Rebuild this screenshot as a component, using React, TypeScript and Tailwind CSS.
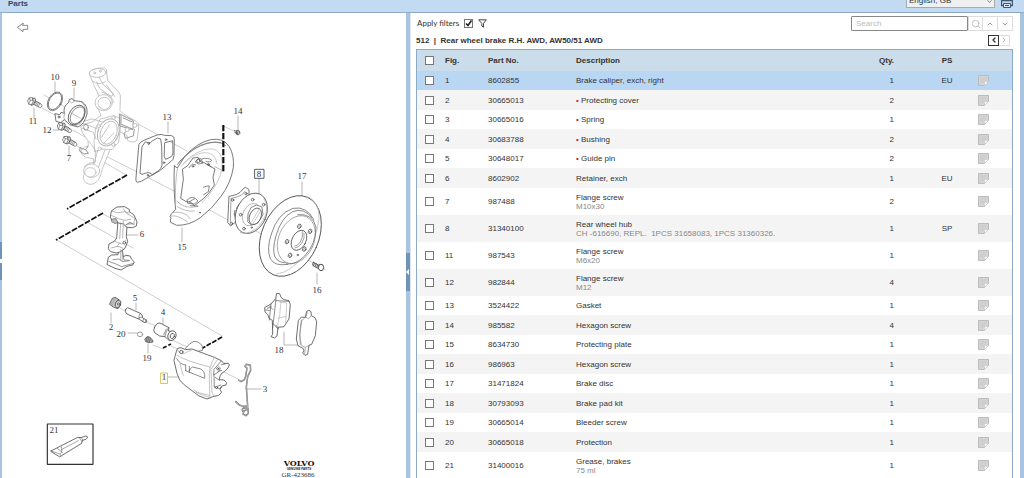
import React from "react";
import { ChevronDown, ChevronLeft, ChevronRight, ChevronUp, Search } from "lucide-react";

type Part = { fig: string; no: string; name: string; note?: string; sub?: boolean; qty: number; ps?: string };

const parts: Part[] = [
  { fig: "1", no: "8602855", name: "Brake caliper, exch, right", qty: 1, ps: "EU" },
  { fig: "2", no: "30665013", name: "Protecting cover", sub: true, qty: 2 },
  { fig: "3", no: "30665016", name: "Spring", sub: true, qty: 1 },
  { fig: "4", no: "30683788", name: "Bushing", sub: true, qty: 2 },
  { fig: "5", no: "30648017", name: "Guide pin", sub: true, qty: 2 },
  { fig: "6", no: "8602902", name: "Retainer, exch", qty: 1, ps: "EU" },
  { fig: "7", no: "987488", name: "Flange screw", note: "M10x30", qty: 2 },
  { fig: "8", no: "31340100", name: "Rear wheel hub", note: "CH -616690, REPL.  1PCS 31658083, 1PCS 31360326.", qty: 1, ps: "SP" },
  { fig: "11", no: "987543", name: "Flange screw", note: "M6x20", qty: 1 },
  { fig: "12", no: "982844", name: "Flange screw", note: "M12", qty: 4 },
  { fig: "13", no: "3524422", name: "Gasket", qty: 1 },
  { fig: "14", no: "985582", name: "Hexagon screw", qty: 4 },
  { fig: "15", no: "8634730", name: "Protecting plate", qty: 1 },
  { fig: "16", no: "986963", name: "Hexagon screw", qty: 1 },
  { fig: "17", no: "31471824", name: "Brake disc", qty: 1 },
  { fig: "18", no: "30793093", name: "Brake pad kit", qty: 1 },
  { fig: "19", no: "30665014", name: "Bleeder screw", qty: 1 },
  { fig: "20", no: "30665018", name: "Protection", qty: 1 },
  { fig: "21", no: "31400016", name: "Grease, brakes", note: "75 ml", qty: 1 },
];

const callouts: [string, number, number][] = [
  ["10", 55, 80], ["9", 74, 86], ["11", 33, 124], ["12", 47, 133], ["7", 69, 161], ["13", 167, 120],
  ["14", 238, 114], ["8", 259, 177], ["17", 302, 179], ["15", 182, 250], ["6", 142, 237], ["16", 317, 293],
  ["5", 135, 301], ["4", 163, 315], ["2", 111, 330], ["20", 121, 337], ["19", 147, 361], ["1", 164, 380],
  ["3", 265, 392], ["18", 279, 353], ["21", 54, 433],
];

const box = "m-0 block size-[9px] appearance-none border border-[#777] bg-white";

function Note() {
  return (
    <svg viewBox="0 0 11 11" className="mx-auto block size-[11px]" aria-hidden="true">
      <path d="M.5.5h10v6l-4 4h-6z" fill="#d4d4d4" stroke="#bcbcbc" />
      <path d="M2 3h7M2 5h6M2 7h4" stroke="#c3c3c3" strokeWidth=".6" />
      <path d="M10.500 6.500h-4v4z" fill="#fafafa" stroke="#c4c4c4" strokeWidth=".6" />
    </svg>
  );
}

function Screw({ x, y, s = 1 }: { x: number; y: number; s?: number }) {
  return (
    <g transform={`translate(${x} ${y}) scale(${s})`} stroke="#444" strokeWidth="2" fill="#fff">
      <path d="M-4-6 19 7q5 4 2 8t-7 2L-8 5z" />
      <path d="m4-1-5 9m9-7-5 9m9-7-5 9m9-7-5 9" strokeWidth="1.600" />
      <ellipse cx="-5" cy="0" rx="6" ry="12" transform="rotate(25 -5 0)" fill="#ddd" />
      <path d="m-8-12-9 1-4 9 3 9 8 3 5-9z" />
      <path d="m-17-11 4 7-5 11m5-11 8 0" strokeWidth="1.600" />
    </g>
  );
}

function Diagram() {
  return (
    <svg viewBox="2 13 404 465" className="block w-full shrink-0" role="img" aria-label="Exploded view of rear wheel brake" strokeLinecap="round" strokeLinejoin="round">
      {/* assembly axes */}
      <g stroke="#b9b9b9" strokeWidth=".7" fill="none">
        <path d="M44 95 82 117M42 108l22 12M73 130l12 7M77 146l49 29M122 115l65 36M98 152l78 40M176 192l54 29M256 231l70 39M223 126l11 5M214 168l10 3" />
        <path d="M69 212l64 36M57 240l165 96M103 214l10 5M120 308l7 4M146 322l10 4M174 341l22 10M153 345l10 4M171 346l9 4M222 371l16 8" />
        <path d="M55 82v12M74 88v12M34 108v10M69 146v9M53 130h6M168 122v11M238 116v15M259 179v15M302 182v14M182 228v14M127 235h11M317 273v11M136 303v7M163 318v8M111 313v10M128 333h9M148 344v9M168 377h11M246 389h15M284 332v13h16" stroke="#999" />
      </g>
      <g stroke="#111" strokeWidth="1.700" fill="none" strokeLinecap="butt">
        <path d="m127 175-60 34" strokeDasharray="6 1.500" />
        <path d="m103 213-47 27" strokeDasharray="6 1.500" />
        <path d="m201 349 21-12" strokeDasharray="5 1.400" />
        <path d="m163 348 8-4" strokeDasharray="4 2" />
      </g>

      {/* knuckle, sensor ring and screws */}
      <g transform="scale(.333333)" fill="none" stroke="#4a4a4a" strokeWidth="2.300">
        <g stroke="#b4b4b4" fill="#fff">
          <path d="M269 224q-3-11 11-16t34-4q8 3 6 14l3 23 34 36q6 7 4 20l-1 35 9 9 38 22q11 7 9 21l-5 37q-12 10-28 0l-3-16-22-10-16 15-6 24-28 70-9 29q-9 18-26 20-18 0-23-18-2-18 15-22l12-3 5-16-2-18-23-4q-17-9-14-21l10-9 12-5-1-15-17-24-5-18 12-8 21-5 28-21-10-22 8-28-18-38z" />
          <ellipse cx="293" cy="219" rx="25" ry="13" transform="rotate(-5 293 219)" />
          <circle cx="284" cy="219" r="3" /><circle cx="301" cy="214" r="3" />
          <path fill="none" d="M277 243q20 15 39 2M297 232l15 24 28 25-4 8-31-13M290 246l9 19 33 25 10 17M319 254l26 36" />
          <ellipse cx="311" cy="308" rx="26" ry="24" /><ellipse cx="313" cy="310" rx="19" ry="18" />
          <path d="m288 383 13-26 40-10 19 8 1 31-5 40-20 23-31-2-21 8-2-29z" />
          <ellipse cx="325" cy="397" rx="31" ry="42" transform="rotate(22 325 397)" strokeWidth="3" />
          <ellipse cx="326" cy="398" rx="24" ry="36" transform="rotate(22 326 398)" />
          <path fill="none" d="M304 412l25-38M310 431l31-32" />
          <circle cx="296" cy="378" r="5" /><circle cx="341" cy="353" r="5" /><circle cx="299" cy="446" r="5" /><circle cx="340" cy="434" r="5" />
          <path fill="none" d="m359 342 41 20-1 27-39-11zM363 345v28l35 14M370 354l27 12M384 390l-12 10 4 15 24-7 3-19" stroke="#999" strokeWidth="3" />
          <circle cx="382" cy="389" r="6" /><circle cx="405" cy="376" r="6" />
          <path fill="none" d="m249 371 22 7 19 8M247 385l33 12 8 20M254 363l22-6 29 8M267 424l19 26v35M293 451l-10 38M315 450l-22 58" />
          <ellipse cx="275" cy="512" rx="24" ry="20" /><ellipse cx="271" cy="517" rx="17" ry="14" />
          <path fill="none" d="M253 501q10-16 32-13" />
        </g>
        <path d="m241 443 17 7 7 10-13 2-12-8zM258 448l6-9" stroke="#777" />
        <ellipse cx="258" cy="382" rx="7" ry="9" stroke="#888" />
        <g stroke="#666"><ellipse cx="165" cy="304" rx="20" ry="30" transform="rotate(30 165 304)" fill="#fff" /><ellipse cx="165" cy="304" rx="17" ry="27" transform="rotate(30 165 304)" /></g>
        <path d="m165 342 3 22 14 4 11-9 16 15 25 7q19-8 27-39 3-25-15-37l-25-3-4-6-9 2-2 9q-18 14-13 33l-10-3-3 6z" fill="#fff" />
        <path d="m209 304 6 5 7-4M195 340q-8 16 1 20M241 304q16 10 15 29t-15 37q-13 11-23 5" stroke="#888" strokeWidth="1.800" />
        <ellipse cx="230" cy="345" rx="22" ry="32" transform="rotate(33 230 345)" />
        <ellipse cx="232" cy="346" rx="18" ry="28" transform="rotate(33 232 346)" stroke="#777" />
        <circle cx="177" cy="351" r="3" />
        <path d="m214 339 27 16" stroke="#aaa" />
        <Screw x={104} y={305} /><Screw x={193} y={380} /><Screw x={209} y={421} />
        <path d="m69 70-17 12 17 13v-7h14V76H69z" stroke="#666" fill="#fff" />
      </g>

      {/* gasket, splash plate, hub and disc */}
      <g transform="translate(120 90) scale(.333333)" fill="none" stroke="#505050" strokeWidth="2.300">
        <path fillRule="evenodd" fill="#fff" d="M57 163q3-8 15-12l39-16q13-4 23 1l21 1q9 2 8 14l-1 46q-1 13-10 18l-34 28-39 22q-16 11-26 12-7 0-5-15zM66 171l-6 79 6 3 10-3q8-4 14-1l7 5 19-12q7-5 10-16l-1-57-3-22-10-3-15 9q-5 7-11 5l-9-2zM135 158l23-6 1 37q-1 10-9 13l-13 6-4-8z" />
        <circle cx="86" cy="161" r="2.500" /><circle cx="138" cy="149" r="2.500" /><circle cx="84" cy="256" r="2.500" /><circle cx="132" cy="218" r="2.500" />

        <path d="m163 228 9 6 24-37q36-39 76-48 38-7 56 21 15 26 12 62-7 47-37 87-26 37-62 64-33 24-71 23l-18-9q-2-8 1-13l-3-5 4-7 13-14q-7-57-4-130z" fill="#fff" />
        <path d="m188 237 15-10 7-10 9-13 15-2 9 14 11 3 16 10 15 8-6 25 4 23-17 25-17 17-26 20-10-10-16-3-15-9 8-57z" fill="#fff" />
        <path d="M172 224q31-39 70-58 50-20 75 1M176 217q32-35 66-50 36-15 61-9" stroke="#777" />
        <path d="M183 229q28-36 67-49 34-10 48 9 16 25 2 70-18 44-54 79M190 222q30-31 62-34 35-2 39 33" stroke="#bbb" />
        <path d="M172 236q-8 50-5 112M153 378q20-4 49 17M158 367q36-5 53 19M170 333q24 27 65 16M172 350q25 16 51 13" stroke="#aaa" />
        <path d="M226 215q10-15 17-8l6 12-12 3zM245 207q19-6 30 4-4 8-17 3M207 233l10-11 10 3M202 329q17-16 32 4l-11 9-19-2zM208 335l16-9M250 292q10-5 18-4l-3 17-14 9M211 347l22 1M262 223l11 6" strokeWidth="2" />
        <circle cx="219" cy="229" r="2.500" /><circle cx="265" cy="223" r="2.500" /><circle cx="235" cy="213" r="5" /><circle cx="240" cy="368" r="1.500" />
        <path d="m284 230 27 13" stroke="#aaa" />
        <path d="M310 105v140" stroke="#111" strokeWidth="6.500" strokeDasharray="19 5" strokeLinecap="butt" />

        <path d="m328 319 20-5q14-5 21-17l8-5 10 7v20l-5 33-27 38-23 18-8-9z" fill="#fff" />
        <path d="m334 325 17-4q17-4 24-17M333 326l-2 69" strokeWidth="1.600" />
        <circle cx="338" cy="330" r="3.500" /><circle cx="378" cy="311" r="3.500" /><circle cx="334" cy="400" r="3.500" />
        <path d="M350 355q16-27 39-35M345 361l-2 11 4 12 13-2" strokeWidth="4" stroke="#888" />
        <ellipse cx="394" cy="370" rx="45" ry="63" transform="rotate(24 394 370)" fill="#fff" />
        <path d="M432 327q14 18 5 47-12 36-45 52-19 9-31 2" stroke="#aaa" />
        <ellipse cx="394" cy="374" rx="25" ry="35" transform="rotate(25 394 374)" stroke="#aaa" />
        <path d="m394 352 16-7 16 6 3 23-16 26-19 5-11-10 1-22z" fill="#fff" stroke="#666" />
        <ellipse cx="406" cy="379" rx="17" ry="26" transform="rotate(25 406 379)" fill="#fff" /><path d="m394 397 23-39M399 401l23-37" stroke="#bbb" />
        <circle cx="398" cy="329" r="4" /><circle cx="431" cy="344" r="4" /><circle cx="362" cy="374" r="4" /><circle cx="372" cy="416" r="4" /><circle cx="395" cy="413" r="2" />

        <ellipse cx="511" cy="438" rx="85" ry="127" transform="rotate(24 511 438)" fill="#fff" strokeWidth="2.600" />
        <path d="M568 322q30 17 29 63-5 60-47 113-38 49-80 54" stroke="#bbb" />
        <path d="M582 390q-22-43-63-35-46 15-65 77-15 45-3 74 13 24 52 17M576 383q-24-31-58-18-34 17-50 72-12 44-3 64 11 20 38 17" stroke="#666" />
        <ellipse cx="529" cy="449" rx="53" ry="75" transform="rotate(24 529 449)" stroke="#999" fill="#fff" />
        <path d="M533 374q44-5 55 37 0 51-34 87-27 27-54 24" stroke="#666" />
        <ellipse cx="537" cy="451" rx="21" ry="32" transform="rotate(27 537 451)" /><path d="M552 429q4 15-7 31-9 13-20 14M547 425q3 17-6 31-8 12-17 13" strokeWidth="1.600" />
        {[[538, 409], [570, 424], [501, 455], [553, 477], [510, 496]].map(([x, y]) => (
          <g key={x}><ellipse cx={x} cy={y} rx="5" ry="7" transform={`rotate(22 ${x} ${y})`} /><path d={`M${x + 2} ${y - 4}q-6 4-3 9`} strokeWidth="1.500" /></g>
        ))}
        <circle cx="533" cy="495" r="2" />
        <path d="m580 517 18 10 2 11-20-10q-6-6 0-11zM584 518l-4 9M589 520l-4 10M594 523l-4 10" fill="#ddd" />
        <path d="m600 523 8 1 3 8-3 9-8 1-5-7z" fill="#fff" strokeWidth="3" />
        <path d="m343 121 9 6M344 127l9 4M351 121l7 2 2 7-5 5-6-3z" strokeWidth="2.600" fill="#bbb" />
        <path d="M405 238h27v27h-27z" strokeWidth="2.400" stroke="#333" />
      </g>

      {/* caliper bracket */}
      <g transform="translate(0 180) scale(.333333)" fill="#fff" stroke="#505050" strokeWidth="2.500">
        <path d="m326 231 9-6 19-1 3-15h10l3 21 8-4 12 2 5 10 8 8-5 9-17 4-18 11-18-5-23-11z" />
        <path fill="none" d="m326 244 22 8 17 8 13-4 20-5M339 239l18-2 11 8 20-3M370 230l2 10 15 1" strokeWidth="1.800" />
        <path d="m354 121-4 53-7 10-16 8-2 14 7 9 17 4 11-3 15-11 8-20-4-15 3-48z" />
        <path d="m332 103 3-11 16-11 23-1 15 9-2 5 15 11 9 21-2 12-11 5-17-1-11-10-19-4-15-7-4-8z" />
        <path fill="none" d="M335 94q20 8 38 1l14 4M370 86l10 14 24 15-2 17M334 106l21 10 20 5 17-3M370 123l-2 50M362 129l-3 47M344 184l21 8 11-10M333 204l21-5 15 6M351 199l8-10M362 209v32M367 209v32" stroke="#888" strokeWidth="1.800" />
        <path d="m335 118 12-3 7 12-8 4-10-5zM377 135l12-8 13 6" fill="#bbb" strokeWidth="1.800" />
        <circle cx="373" cy="188" r="4" />
      </g>

      {/* caliper, pins, pads and spring */}
      <g transform="translate(90 280) scale(.333333)" fill="#fff" stroke="#505050" strokeWidth="2.500">
        <path d="m59 72 8-17 9-3 16 11-1 13-7 10-12-4z" fill="#c4c4c4" /><path d="m65 57-2 18M71 54l-3 22M76 54l-3 10" stroke="#999" strokeWidth="1.600" /><ellipse cx="84" cy="72" rx="8" ry="11" transform="rotate(20 84 72)" fill="#e2e2e2" /><circle cx="85" cy="72" r="3.500" />
        <path d="m107 88 6-5 40 18q7 8 4 12l13 8v5l-6 2-16-10-37-16q-8-6-4-14z" /><path fill="none" d="M150 101q-6 8-3 16M157 111l-9 2M161 117l-3 7M168 120l-3 7" strokeWidth="1.800" />
        <path d="m193 143 7-11q8-6 14-1l23 12-2 10 15 2 5 10-5 14-12 3-13-12-16-2-14-9q-7-7-2-16z" /><path fill="none" d="m236 143-7 12-4 14M229 147l-8 18" strokeWidth="1.800" /><ellipse cx="246" cy="167" rx="12" ry="15" transform="rotate(25 246 167)" /><ellipse cx="247" cy="168" rx="6" ry="8" transform="rotate(20 247 168)" />
        <ellipse cx="150" cy="163" rx="8" ry="7" stroke="#888" />
        <path d="m165 177 6-7 8 1 8 9 2 6-7 1-6 1-8-3z" fill="#aaa" /><path d="m171 172-2 10M176 172l-3 13M181 176l-3 10" strokeWidth="1.800" />
        <path d="m287 204 13-13 12-7 12 2 12 10 2 15-24 5-19-3z" stroke="#777" />
        <path d="m260 212 3-7 10-2 13 6 20-2 67 25 21 10 7 8h14l3 5-4 9-10 10q-9 4-13 12l-4 13 15 1 8 8-2 7-13 3-5 10 5 9-9 9-18 4-17 7-24-9-46-35-12-13-8-20-9-38z" />
        <path fill="none" d="M263 210q8 16 20 10l21-10M261 226q22 15 98 35M374 231q-19 29-16 67l2 57M382 239l-19 29 3 70 9 13M270 251q4 20 10 35M318 336l41 10M311 328l12 12 37 13" stroke="#999" strokeWidth="1.800" />
        <path fill="none" d="M260 236q12 19 26 19M287 272l57 23q2-13-3-20l-8-8-26-6q-6 4-9 11M287 255v17M298 259v18M394 243l-22 25-1 17 15-10 5-11-5-5M372 285l1 36 16 5 7-4M394 254l14-3M384 274l11-3M388 301l-12-9M373 322l19-7" strokeWidth="2" />
        <circle cx="383" cy="266" r="3" /><circle cx="380" cy="323" r="3" /><circle cx="274" cy="216" r="5" />
        <g fill="none">
          <path d="m446 300 7 5 10-6 4-10 4-25-6-5 4-6 12 3 1 15-9 19-4 31 4 58-3 10-8 4-3 9 9 5 7-7-1-16-13-1-4 5 1 6M437 365l11 10 11 4h13" stroke="#666" strokeWidth="4.500" />
          <path d="m446 300 7 5 10-6 4-10 4-25-6-5 4-6 12 3 1 15-9 19-4 31 4 58-3 10-8 4-3 9 9 5 7-7-1-16-13-1-4 5 1 6M437 365l11 10 11 4h13" stroke="#eee" strokeWidth="1.400" />
        </g>

        <path d="m525 82 18-10 14-16 3-16 9 1 4 11 9 7 15 3 4 12-4 43-10 15-5 8-18 2-3 26-7 6-11-4 5-7-1-42-10-6-4-12-7-6z" />
        <path fill="none" d="m543 72-5 48M558 57l-8 70-2 17M558 62l38 2M532 85l11-5M527 90l11 1M549 130l15 17M540 80l8 8M565 145l-7-9" strokeWidth="2" /><path fill="none" d="m573 65-4 39-7 37M564 115l24-6M570 66l20 3-3 62" stroke="#aaa" strokeWidth="1.800" />
        <path d="m646 111 4-17q7-7 13 1l1 12 11 6 5 12-4 42-11 26-8 3-4 27-8 3-7-7 4-7-3-7-15-8-5-20 6-56 9-9z" /><path fill="none" d="m646 111-11 12-6 43 5 30 12 6 11-6M634 120q-7 45-3 74M646 204l-2 17M664 107l-8 9-10-5M652 96l-3 12" stroke="#777" strokeWidth="1.800" />
      </g>
      <rect x="161" y="373" width="6.500" height="10.500" fill="#fffbe7" stroke="#d8c46c" />

      {/* grease tube */}
      <g transform="translate(0 400) scale(.333333)" fill="#fff" stroke="#505050" strokeWidth="2.500">
        <path d="M142 72h137v121H142z" stroke="#333" strokeWidth="3.500" />
        <path d="m153 153 80-41 10 1 14-5q7 0 5 6l-4 4-11 3-2 9-65 40z" /><path fill="none" d="m153 153 27 9 3 6M180 162q9-7 4-22M184 149l51-27M237 112l9 13M244 113l5 9M172 145l17 14" strokeWidth="1.500" />
      </g>
      <g fontFamily="Liberation Serif, serif" fontSize="9" fill="#333" textAnchor="middle">
        {callouts.map(([n, x, y]) => <text key={n} x={x} y={y}>{n}</text>)}
        <text x="298" y="477" fontSize="7">GR-423686</text>
      </g>
      <text x="299" y="466" fontSize="8" fontWeight="700" fontFamily="DejaVu Serif, serif" textAnchor="middle" fill="#111">VOLVO</text>
      <text x="299" y="470" fontSize="3" fontWeight="700" fontFamily="Liberation Sans, sans-serif" textAnchor="middle" fill="#222">GENUINE PARTS</text>
    </svg>
  );
}

export default function App() {
  return (
    <div className="flex h-screen flex-col overflow-hidden bg-[#a9c4e0] font-['Liberation_Sans',Arial,sans-serif] text-[8px] leading-[9px] text-[#333]">
      <header className="flex h-[13px] shrink-0 items-end justify-between border-b border-[#8dabc6] bg-[#c3daf3] pr-[11px] pl-2">
        <h1 className="pb-1 font-bold text-[#33475f]">Parts</h1>
        <div className="flex items-end gap-[6px] pb-1">
          <div className="relative">
            <select aria-label="Language" className="block h-[14px] w-[89px] appearance-none border border-[#aaa] bg-[#f0f0f0] px-[2px] text-[8px] leading-[12px] text-[#333]">
              <option>English, GB</option>
            </select>
            <ChevronDown className="pointer-events-none absolute right-[2px] bottom-[3px] size-[7px]" />
          </div>
          <button aria-label="Print" className="block">
            <svg viewBox="0 0 12 12" className="block size-3" fill="none" stroke="#3f566f">
              <path d="M2.500 4V.5h7V4M2.500 9.500H.5v-5h11v5h-2" strokeWidth="1.300" />
              <path d="M2.500 7.500h7v4h-7zM4 9.500h4" fill="#dce8f5" />
            </svg>
          </button>
        </div>
      </header>

      <div className="grid min-h-0 flex-1 grid-cols-[2px_404fr_5px_609fr_4px]">
        <div className="relative">
          <span className="absolute top-[229px] left-0 h-[38px] w-[2px] bg-[#6f94ba]" />
          <span className="absolute top-[246px] left-0 h-1 w-[2px] bg-white" />
        </div>
        <section className="overflow-hidden bg-white"><Diagram /></section>
        <div className="relative border-r border-[#dbe6f0]">
          <button aria-label="Collapse panel" className="absolute top-[240px] left-0 flex h-[38px] w-1 items-center bg-[#6f94ba]">
            <span className="border-y-[3px] border-r-[3px] border-y-transparent border-r-white" />
          </button>
        </div>
        <section className="flex min-w-0 flex-col overflow-hidden bg-white pr-[7px] pl-[5px]">
          <div className="flex shrink-0 items-center justify-between pt-[3px]">
            <div className="flex items-center gap-[5px] pl-px">
              <label htmlFor="filters" className="font-['Lato',sans-serif]">Apply filters</label>
              <span className="relative block">
                <input id="filters" type="checkbox" defaultChecked className={box} />
                <svg viewBox="0 0 9 9" className="pointer-events-none absolute inset-0 size-[9px]" fill="none" stroke="#222" strokeWidth="1.600"><path d="m2 4.500 2 2 3.500-5" /></svg>
              </span>
              <button aria-label="Filter">
                <svg viewBox="0 0 9 9" className="block size-[9px]" fill="none" stroke="#444"><path d="M.7.8h7.600L5.500 4.500v3.700L3.800 7V4.500z" /></svg>
              </button>
            </div>
            <div className="flex h-[15px]">
              <input aria-label="Search" placeholder="Search" className="w-[117px] rounded-[1px] border border-[#888] px-1 text-[8px] placeholder:text-[#bbb]" />
              <button aria-label="Find" className="grid w-[15px] place-items-center border border-[#ddd]"><Search className="size-[10px] text-[#bbb]" /></button>
              <button aria-label="Previous match" className="grid w-[15px] place-items-center border border-l-0 border-[#ddd]"><ChevronUp className="size-2 text-[#999]" strokeWidth={3} /></button>
              <button aria-label="Next match" className="grid w-[15px] place-items-center border border-l-0 border-[#ddd]"><ChevronDown className="size-2 text-[#999]" strokeWidth={3} /></button>
            </div>
          </div>
          <div className="flex h-[18px] shrink-0 items-center justify-between pr-[3px]">
            <h2 className="font-bold whitespace-pre">512  |  Rear wheel brake R.H. AWD, AW50/51 AWD</h2>
            <div className="flex">
              <button aria-label="Previous section" className="grid size-[11px] place-items-center border border-[#333]"><ChevronLeft className="size-2" strokeWidth={4} /></button>
              <button aria-label="Next section" className="grid size-[11px] place-items-center border border-l-0 border-[#ddd]"><ChevronRight className="size-2 text-[#bbb]" strokeWidth={3} /></button>
            </div>
          </div>
          <div className="border border-b-0 border-[#8dabc6]">
            <table className="w-full table-fixed border-collapse text-left">
              <colgroup>
                <col className="w-7" /><col className="w-[43px]" /><col className="w-[88px]" /><col /><col className="w-[60px]" /><col className="w-[60px]" /><col className="w-[58px]" />
              </colgroup>
              <thead>
                <tr className="h-[21px] bg-[#cbdcea] text-[#333]">
                  <th className="p-0 pl-2"><input type="checkbox" aria-label="Select all parts" className={box} /></th>
                  <th className="p-0">Fig.</th>
                  <th className="p-0">Part No.</th>
                  <th className="p-0">Description</th>
                  <th className="p-0 text-right">Qty.</th>
                  <th className="p-0 pl-[46px] text-center whitespace-nowrap">PS</th>
                  <td className="p-0" />
                </tr>
              </thead>
              <tbody>
                {parts.map((p, i) => (
                  <tr key={p.fig} className={`${p.note ? "h-[27px]" : i % 2 ? "h-5" : "h-[19px]"} ${i === 0 ? "bg-[#b9d6f2]" : i % 2 ? "bg-[#f4f4f4]" : "bg-white"}`}>
                    <td className="p-0 pl-2"><input type="checkbox" aria-label={`Select part ${p.no}`} className={box} /></td>
                    <td className="p-0">{p.fig}</td>
                    <td className="p-0">{p.no}</td>
                    <td className="p-0">
                      {p.sub && <span className="text-[#c22]">• </span>}{p.name}
                      {p.note && <div className="whitespace-pre text-[#888]">{p.note}</div>}
                    </td>
                    <td className="p-0 text-right">{p.qty}</td>
                    <td className="p-0 pl-[46px] text-center">{p.ps}</td>
                    <td className="p-0"><Note /></td>
                  </tr>
                ))}
              </tbody>
            </table>
          </div>
        </section>
        <div />
      </div>
    </div>
  );
}
